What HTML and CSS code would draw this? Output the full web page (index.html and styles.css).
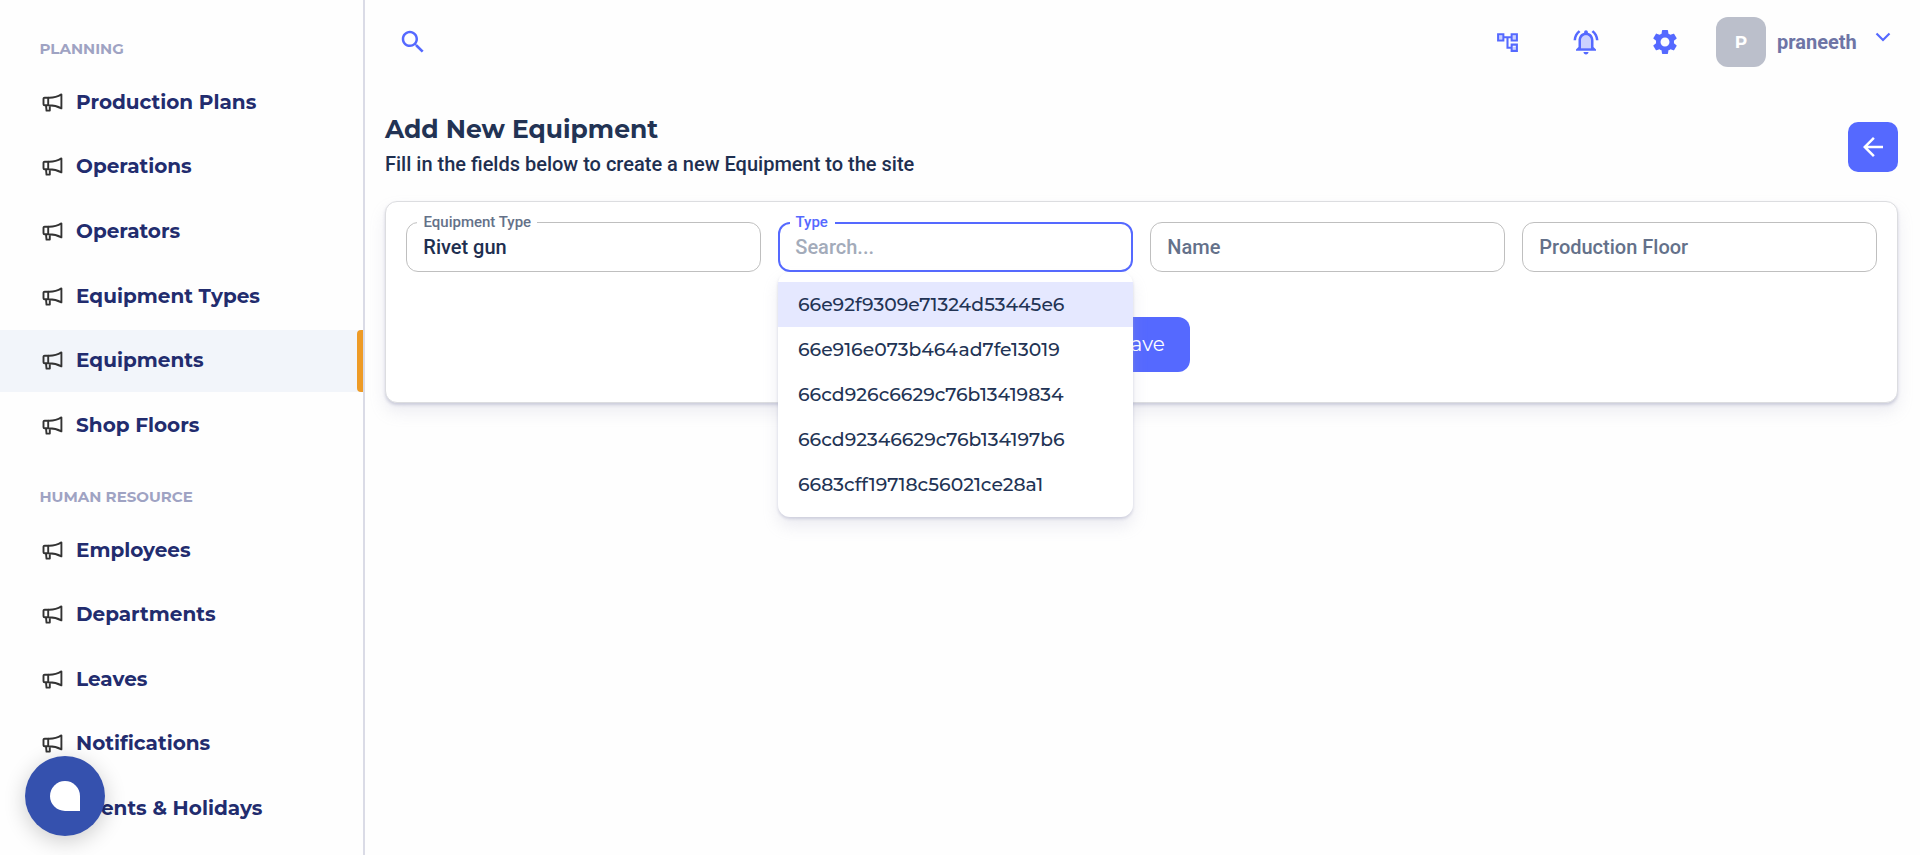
FILE: index.html
```html
<!DOCTYPE html>
<html lang="en">
<head>
<meta charset="utf-8">
<title>Add New Equipment</title>
<link rel="stylesheet" href="styles.css">
</head>
<body>
<svg class="sprite" aria-hidden="true">
  <symbol id="horn" viewBox="0 0 22 22">
    <path d="M3.600 6.700H7.200v7.600H3.600a1.100 1.100 0 0 1-1.100-1.100V7.800a1.100 1.100 0 0 1 1.100-1.100ZM7.200 6.700c5.200.2 9.300-.9 13.200-3.300v14c-3.700-2-8-3.200-13.200-3.100M5 14.300l.5 5.300h3.300v-5.300"/>
  </symbol>
</svg>
<div class="app">
  <aside class="sidebar">
    <nav class="group">
      <h2 class="group-title">PLANNING</h2>
      <a class="item"><svg class="horn"><use href="#horn"/></svg><span>Production Plans</span></a>
      <a class="item"><svg class="horn"><use href="#horn"/></svg><span>Operations</span></a>
      <a class="item"><svg class="horn"><use href="#horn"/></svg><span>Operators</span></a>
      <a class="item"><svg class="horn"><use href="#horn"/></svg><span>Equipment Types</span></a>
      <a class="item active"><svg class="horn"><use href="#horn"/></svg><span>Equipments</span></a>
      <a class="item"><svg class="horn"><use href="#horn"/></svg><span>Shop Floors</span></a>
    </nav>
    <nav class="group">
      <h2 class="group-title">HUMAN RESOURCE</h2>
      <a class="item"><svg class="horn"><use href="#horn"/></svg><span>Employees</span></a>
      <a class="item"><svg class="horn"><use href="#horn"/></svg><span>Departments</span></a>
      <a class="item"><svg class="horn"><use href="#horn"/></svg><span>Leaves</span></a>
      <a class="item"><svg class="horn"><use href="#horn"/></svg><span>Notifications</span></a>
      <a class="item"><svg class="horn"><use href="#horn"/></svg><span>Events &amp; Holidays</span></a>
    </nav>
  </aside>
  <main class="main">
    <header class="topbar">
      <svg class="icon search" viewBox="0 0 24 24"><path d="M15.500 14h-.79l-.28-.27C15.410 12.590 16 11.110 16 9.500 16 5.910 13.090 3 9.500 3S3 5.910 3 9.500 5.910 16 9.500 16c1.610 0 3.090-.59 4.230-1.570l.27.28v.79l5 4.990L20.490 19l-4.990-5zm-6 0C7.010 14 5 11.990 5 9.500S7.010 5 9.500 5 14 7.010 14 9.500 11.990 14 9.500 14z"/></svg>
      <div class="tools">
        <svg class="icon tree" viewBox="0 0 24 24"><path opacity=".3" d="M17 16h3v3h-3zM17 5h3v4h-3zM4 5h3v4H4z"/><path d="M22 11V3h-7v3H9V3H2v8h7V8h2v10h4v3h7v-8h-7v3h-2V8h2v3h7zM7 9H4V5h3v4zm10 6h3v4h-3v-4zm0-10h3v4h-3V5z"/></svg>
        <svg class="icon bell" viewBox="0 0 24 24"><path opacity=".3" d="M12 6.500c-2.490 0-4 2.020-4 4.500v6h8v-6c0-2.480-1.510-4.500-4-4.500z"/><path d="M12 22c1.100 0 2-.9 2-2h-4c0 1.100.9 2 2 2zm6-6v-5c0-3.070-1.630-5.640-4.500-6.320V4c0-.83-.67-1.500-1.500-1.500s-1.500.67-1.500 1.500v.68C7.640 5.360 6 7.920 6 11v5l-2 2v1h16v-1l-2-2zm-2 1H8v-6c0-2.480 1.510-4.500 4-4.500s4 2.020 4 4.500v6zM7.580 4.080 6.150 2.650C3.750 4.480 2.170 7.300 2.030 10.500h2c.15-2.650 1.510-4.970 3.550-6.420zm12.390 6.420h2c-.15-3.200-1.730-6.020-4.120-7.850l-1.420 1.430c2.020 1.450 3.390 3.770 3.540 6.420z"/></svg>
        <svg class="icon gear" viewBox="0 0 24 24"><path d="M19.140 12.940c.04-.3.06-.61.06-.94 0-.32-.02-.64-.07-.94l2.030-1.580c.18-.14.23-.41.12-.61l-1.920-3.320c-.12-.22-.37-.29-.59-.22l-2.390.96c-.5-.38-1.030-.7-1.620-.94l-.36-2.540c-.04-.24-.24-.41-.48-.41h-3.840c-.24 0-.43.17-.47.41l-.36 2.540c-.59.24-1.130.57-1.620.94l-2.390-.96c-.22-.08-.47 0-.59.22L2.740 8.870c-.12.21-.08.47.12.61l2.030 1.580c-.05.3-.09.63-.09.94s.02.64.07.94l-2.030 1.580c-.18.14-.23.41-.12.61l1.920 3.320c.12.22.37.29.59.22l2.390-.96c.5.38 1.030.7 1.620.94l.36 2.540c.05.24.24.41.48.41h3.840c.24 0 .44-.17.47-.41l.36-2.540c.59-.24 1.130-.56 1.620-.94l2.390.96c.22.08.47 0 .59-.22l1.920-3.320c.12-.22.07-.47-.12-.61l-2.010-1.580zM12 15.600c-1.980 0-3.600-1.620-3.600-3.600s1.620-3.600 3.600-3.600 3.600 1.620 3.600 3.600-1.620 3.600-3.600 3.600z"/></svg>
        <div class="user">
          <span class="avatar">P</span>
          <span class="name">praneeth</span>
          <svg class="chevron" viewBox="0 0 16 10"><path d="M1.500 1.500 8 8l6.500-6.500"/></svg>
        </div>
      </div>
    </header>
    <section class="page-head">
      <div>
        <h1 class="title">Add New Equipment</h1>
        <p class="subtitle">Fill in the fields below to create a new Equipment to the site</p>
      </div>
      <button class="back" aria-label="Back"><svg class="icon arrow" viewBox="0 0 24 24"><path d="M20 11H7.830l5.590-5.590L12 4l-8 8 8 8 1.410-1.410L7.830 13H20v-2z"/></svg></button>
    </section>
    <section class="card">
      <div class="fields">
        <div class="field"><span class="label">Equipment Type</span><span class="value">Rivet gun</span></div>
        <div class="field focused"><span class="label">Type</span><span class="value hint">Search...</span>
          <ul class="menu">
            <li class="option selected">66e92f9309e71324d53445e6</li>
            <li class="option">66e916e073b464ad7fe13019</li>
            <li class="option">66cd926c6629c76b13419834</li>
            <li class="option">66cd92346629c76b134197b6</li>
            <li class="option">6683cff19718c56021ce28a1</li>
          </ul>
        </div>
        <div class="field"><span class="value empty">Name</span></div>
        <div class="field"><span class="value empty">Production Floor</span></div>
      </div>
      <button class="save">Save</button>
    </section>
  </main>
  <button class="chat" aria-label="Chat"><span class="bubble"></span></button>
</div>
</body>
</html>
```
FILE: styles.css
```css
* { box-sizing: border-box; }
body { margin: 0; background: #fefefe; font-family: Roboto, "Liberation Sans", sans-serif; color: #1e2f50; }
h1, h2, p, ul { margin: 0; padding: 0; }
button { border: 0; padding: 0; font: inherit; }
.sprite { position: absolute; width: 0; height: 0; }
.app { display: flex; height: 855px; overflow: hidden; }

.sidebar { flex: none; width: 365px; padding-top: 11px; border-right: 2px solid #dadbe6; overflow: hidden; font-family: Montserrat, Inter, sans-serif; }
.group-title { height: 60px; padding: 0 39.500px; line-height: 75px; font-size: 15px; font-weight: 700; color: #9fa3c3; }
.item { display: flex; align-items: center; gap: 13px; height: 62px; margin-bottom: 2.650px; padding: 0 0 .6px 41px; font-size: 20px; font-weight: 700; color: #222c6e; white-space: nowrap; position: relative; }
.item.active { background: #f2f5fa; }
.item.active::after { content: ""; position: absolute; right: 0; top: 0; width: 6px; height: 100%; border-radius: 4px 0 0 4px; background: #ee9b26; }
.horn { width: 22px; height: 22px; fill: none; stroke: #333; stroke-width: 1.900; stroke-linejoin: round; }

.main { flex: 1; padding: 0 22px 0 20px; }
.topbar { display: flex; align-items: center; justify-content: space-between; height: 84px; padding-left: 13px; }
.icon { display: block; fill: #5569ff; width: 30px; height: 30px; }
.tools { display: flex; align-items: center; }
.tree { width: 25px; height: 25px; margin-right: 51px; }
.bell { margin-right: 49px; }
.gear { margin-right: 36px; }
.user { display: flex; align-items: center; padding-right: 7px; }
.avatar { display: flex; align-items: center; justify-content: center; width: 50px; height: 50px; border-radius: 12px; background: #bbbfcb; color: #fff; font-family: Montserrat, Inter, sans-serif; font-size: 17px; font-weight: 700; }
.name { margin-left: 11px; width: 98px; font-size: 20px; font-weight: 700; color: #6e75a6; }
.chevron { width: 16px; height: 10px; margin-bottom: 10px; fill: none; stroke: #5569ff; stroke-width: 2.200; }

.page-head { display: flex; justify-content: space-between; height: 117px; padding-top: 27px; }
.title { height: 36px; line-height: 36px; font-family: Montserrat, Inter, sans-serif; font-size: 25px; font-weight: 700; color: #223354; }
.subtitle { line-height: 34px; font-size: 20px; font-weight: 500; }
.back { display: flex; align-items: center; justify-content: center; width: 50px; height: 50px; margin-top: 11px; border-radius: 10px; background: #5569ff; }
.arrow { fill: #fff; }

.card { height: 202px; padding: 20px; border: 1px solid #dcdde0; border-radius: 12px; background: #fff; box-shadow: 0 2px 3px rgba(159,162,191,.45), 0 9px 16px rgba(159,162,191,.18); }
.fields { display: grid; grid-template-columns: repeat(4, 1fr); gap: 17px; }
.field { position: relative; height: 50px; padding-left: 16.300px; border: 1px solid #bfbfbf; border-radius: 12px; font-weight: 500; }
.focused { padding-left: 15.300px; border: 2px solid #5569ff; }
.label { position: absolute; left: 10px; top: -10px; padding: 0 6px 0 6.500px; background: #fff; font-size: 15px; line-height: 18px; color: #647189; }
.focused .label { left: 10px; top: -11px; padding: 0 7px 0 5.500px; color: #5569ff; }
.value { display: block; line-height: 49px; font-size: 20px; }
.focused .value { line-height: 47px; }
.hint { color: #a3abba; }
.empty { color: #64718a; }
.menu { position: absolute; z-index: 2; top: 48px; left: -2px; width: 355px; padding: 10px 0; border-radius: 12px; background: #fff; list-style: none; box-shadow: 0 2px 3px rgba(159,162,191,.4), 0 9px 16px rgba(159,162,191,.2); }
.option { height: 45px; padding-left: 20px; line-height: 46px; font-family: Montserrat, Inter, sans-serif; font-size: 18.750px; font-weight: 500; color: #223354; }
.selected { background: #e5e8ff; }
.save { display: block; width: 97px; height: 55px; margin: 45px auto 0; padding-bottom: 2px; border-radius: 12px; background: #5569ff; color: #fff; font-family: Montserrat, Inter, sans-serif; font-size: 20px; }

.chat { position: absolute; left: 25px; top: 756px; display: flex; align-items: center; justify-content: center; width: 80px; height: 80px; border-radius: 50%; background: #3551ae; box-shadow: 0 5px 22px rgba(0,0,0,.2); }
.bubble { width: 30px; height: 30px; border-radius: 50% 50% 0 50%; background: #fff; }
```
